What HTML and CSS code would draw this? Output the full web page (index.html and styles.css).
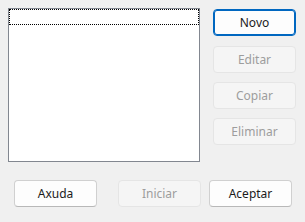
FILE: index.html
```html
<!DOCTYPE html>
<html lang="en">

<head>
    <meta charset="UTF-8">
    <title>Perfís</title>
    <link rel="stylesheet" href="styles.css">
</head>

<body>
    <div class="dialog">
        <div class="dialog-main">
            <div class="list-box">
                <div class="list-focus"></div>
            </div>

            <div class="side-buttons">
                <button class="default">Novo</button>
                <button disabled>Editar</button>
                <button disabled>Copiar</button>
                <button disabled>Eliminar</button>
            </div>
        </div>

        <div class="dialog-footer">
            <button class="help">Axuda</button>
            <button disabled>Iniciar</button>
            <button>Aceptar</button>
        </div>
    </div>
</body>

</html>
```

FILE: styles.css
```css
body {
    margin: 0;
    background-color: #f0f0f0;
    font-family: "Noto Sans", "Open Sans", sans-serif;
    font-size: 12px;
}

.dialog {
    padding: 8px 0 0 8px;
}

.dialog-main {
    display: flex;
    gap: 13px;
}

.list-box {
    box-sizing: border-box;
    width: 192px;
    height: 154px;
    background-color: white;
    border: 1px solid #828790;
}

.list-focus {
    box-sizing: border-box;
    height: 16px;
    border: 1px dotted #000;
}

.side-buttons {
    display: flex;
    flex-direction: column;
    gap: 9px;
    padding-top: 1px;
}

button {
    box-sizing: border-box;
    width: 83px;
    height: 27px;
    padding: 0;
    font: inherit;
    color: #1b1b1b;
    background-color: #fdfdfd;
    border: 1px solid #d0d0d0;
    border-bottom-color: #b8b8b8;
    border-radius: 4px;
}

button.default {
    border: 1px solid #0067c0;
    box-shadow: inset 0 0 0 1px #0067c0;
}

button:disabled {
    color: #9d9d9d;
    background-color: #f5f5f5;
    border-color: #e5e5e5;
}

.side-buttons button + button:nth-child(2) {
    margin-top: 1px;
}

.dialog-footer {
    display: flex;
    gap: 8px;
    margin-top: 18px;
    padding-left: 6px;
}

.dialog-footer .help {
    margin-right: 13px;
}
```
